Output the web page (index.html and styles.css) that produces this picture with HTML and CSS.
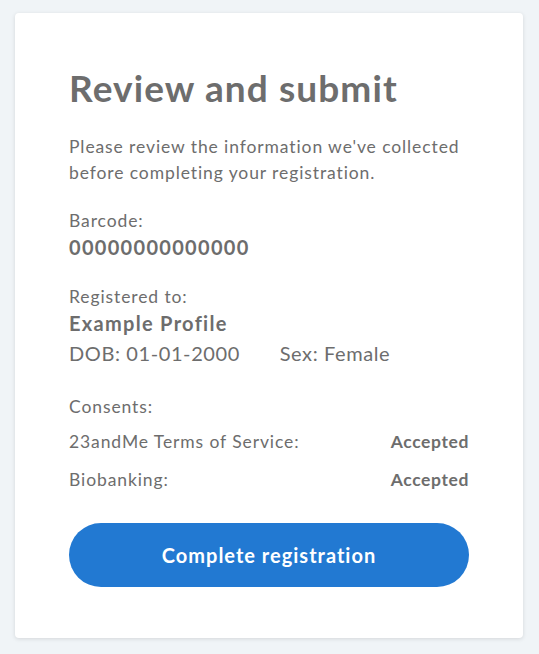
FILE: index.html
```html
<!DOCTYPE html>
<html lang="en">
<head>
    <meta charset="UTF-8">
    <meta name="viewport" content="width=device-width, initial-scale=1.0">
    <title>Review and submit</title>
    <link rel="stylesheet" href="styles.css">
</head>
<body>

    <!-- Review card -->
    <div class="card">
        <h1>Review and submit</h1>

        <p class="intro">Please review the information we've collected before completing your registration.</p>

        <!-- Barcode -->
        <div class="section">
            <div class="label">Barcode:</div>
            <div class="value">00000000000000</div>
        </div>

        <!-- Profile -->
        <div class="section">
            <div class="label">Registered to:</div>
            <div class="value">Example Profile</div>
            <div class="details">
                <span>DOB: 01-01-2000</span>
                <span>Sex: Female</span>
            </div>
        </div>

        <!-- Consents -->
        <div class="section consents">
            <div class="label">Consents:</div>
            <div class="consent-row">
                <span>23andMe Terms of Service:</span>
                <strong>Accepted</strong>
            </div>
            <div class="consent-row">
                <span>Biobanking:</span>
                <strong>Accepted</strong>
            </div>
        </div>

        <button class="button" type="button">Complete registration</button>
    </div>

</body>
</html>
```

FILE: styles.css
```css
body {
    font-family: Lato, "Open Sans", sans-serif;
    background-color: #f0f4f7;
    color: #6d6d6d;
    margin: 0;
    padding: 13px 16px 16px 15px;
}

.card {
    width: 400px;
    background-color: #fff;
    padding: 55px 54px 51px;
    border-radius: 4px;
    box-shadow: 0 1px 4px rgba(0, 0, 0, 0.12);
}

h1 {
    font-size: 37px;
    font-weight: 700;
    line-height: 40px;
    letter-spacing: 1.1px;
    margin: 0 0 26px;
    color: #6d6d6d;
}

.intro {
    font-size: 17.5px;
    line-height: 26px;
    letter-spacing: 0.9px;
    margin: 0 0 22px;
}

.section {
    margin-bottom: 24px;
}

.label {
    font-size: 17.5px;
    line-height: 26px;
    letter-spacing: 0.9px;
}

.value {
    font-size: 20px;
    font-weight: 700;
    line-height: 26px;
    letter-spacing: 1.3px;
}

.details {
    font-size: 20px;
    line-height: 34px;
    letter-spacing: 0.6px;
}

.details span + span {
    margin-left: 34px;
}

.consents .label {
    margin-bottom: 3px;
}

.consent-row {
    display: flex;
    justify-content: space-between;
    font-size: 17.5px;
    line-height: 38px;
    letter-spacing: 0.9px;
}

.consent-row strong {
    font-weight: 700;
    letter-spacing: 0.6px;
}

.button {
    display: block;
    width: 100%;
    height: 64px;
    background-color: #2279d2;
    color: #fff;
    border: none;
    border-radius: 32px;
    font-family: inherit;
    font-size: 20px;
    font-weight: 700;
    letter-spacing: 1px;
    cursor: pointer;
}
```
